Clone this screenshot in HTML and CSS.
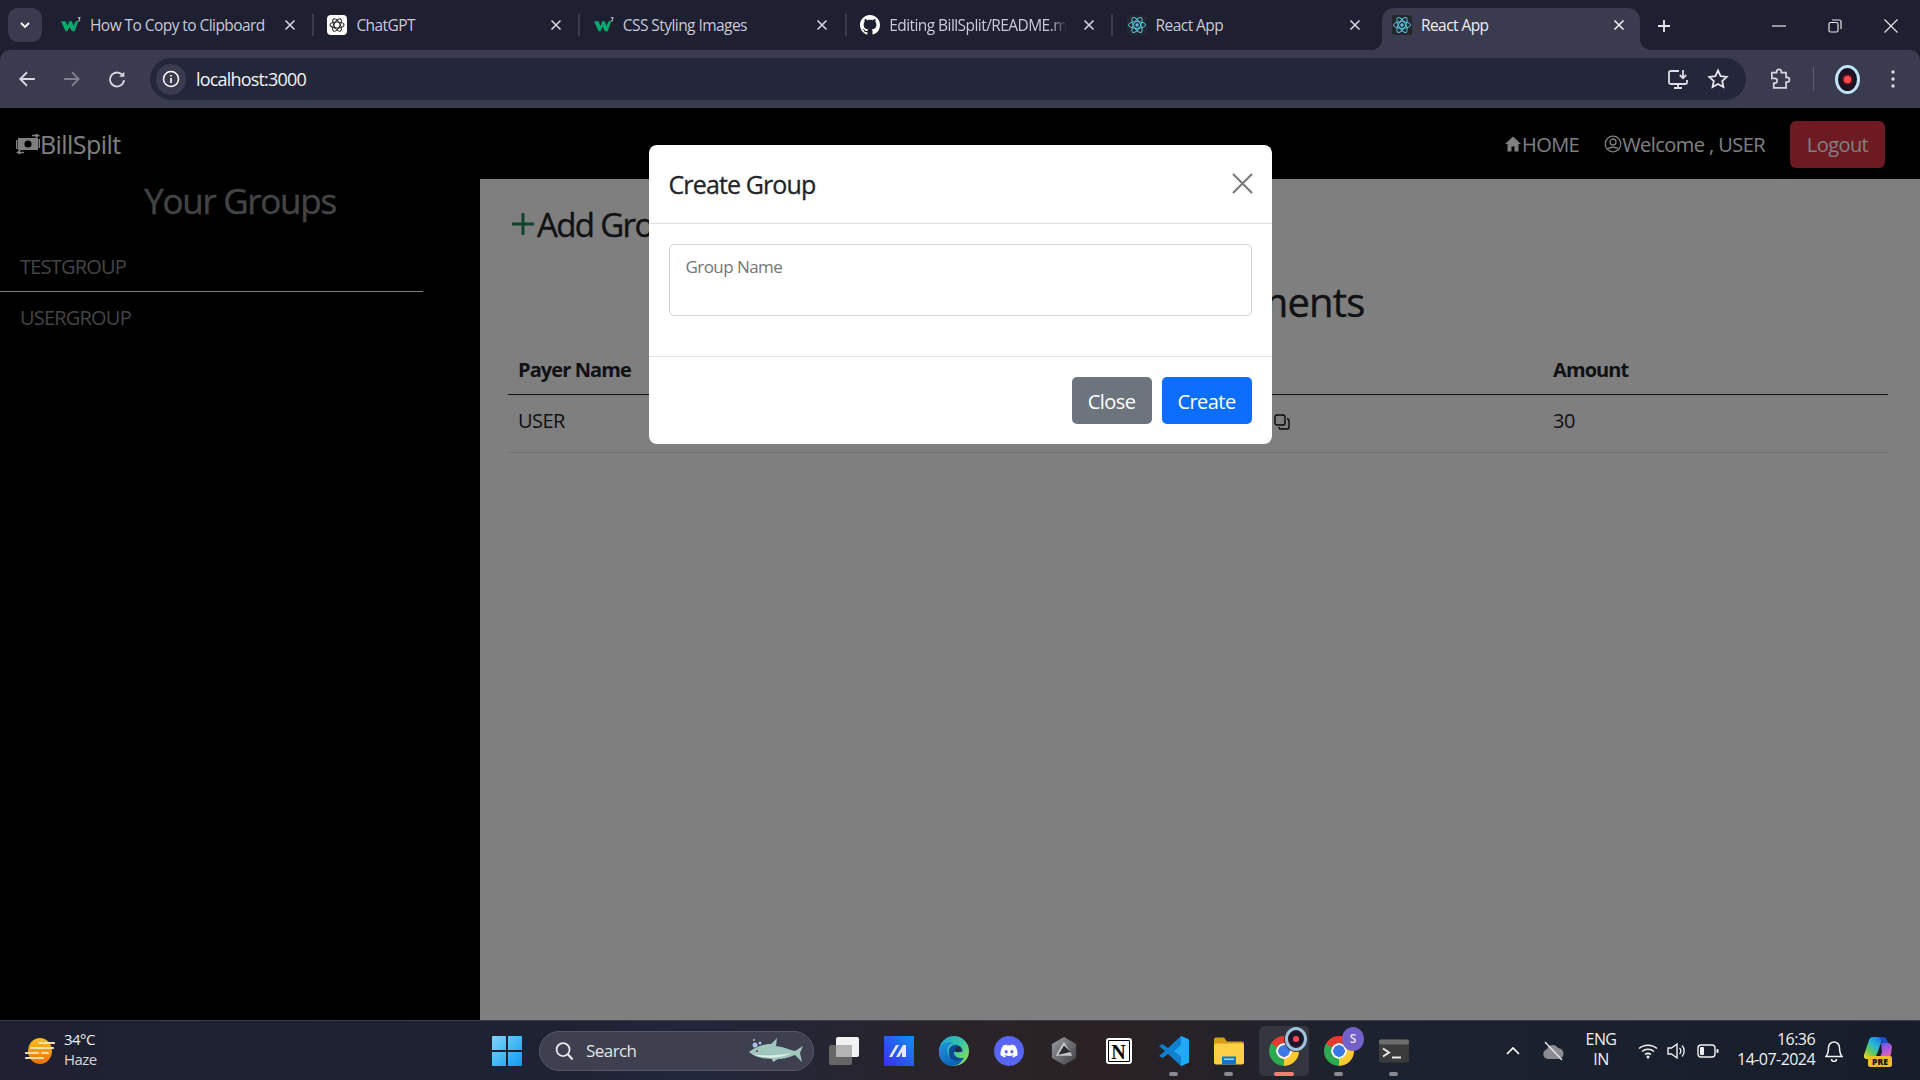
FILE: index.html
```html
<!DOCTYPE html>
<html lang="en">
<head>
<meta charset="utf-8">
<title>React App</title>
<link rel="stylesheet" href="styles.css">
</head>
<body>
<svg width="0" height="0" class="defs">
  <defs>
    <symbol id="w3" viewBox="0 0 22 18"><path fill="#04AA6D" d="M0 5h5l2.300 5 1.700-5h3l1.700 5L16 5h3l-4 11h-3l-2.500-5L7 16H5z"/><path fill="none" stroke="#e0e0e0" stroke-width="1" d="M18.500 1h2.700l-1.500 1.500c1.500 0 1.500 2.800-1.200 2"/></symbol>
    <symbol id="react" viewBox="0 0 20 20"><rect width="20" height="20" rx="2" fill="#23272f"/><g fill="none" stroke="#58c4dc" stroke-width="1"><ellipse cx="10" cy="10" rx="8.500" ry="3.400"/><ellipse cx="10" cy="10" rx="8.500" ry="3.400" transform="rotate(60 10 10)"/><ellipse cx="10" cy="10" rx="8.500" ry="3.400" transform="rotate(120 10 10)"/></g><circle cx="10" cy="10" r="1.700" fill="#58c4dc"/></symbol>
    <symbol id="x" viewBox="0 0 12 12"><path d="M1.500 1.500l9 9M10.500 1.500l-9 9" stroke="currentColor" stroke-width="1.600" fill="none"/></symbol>
  </defs>
</svg>

<div class="screen">
  <header class="browser">
    <div class="tabstrip">
      <button class="tab-menu"><svg width="12" height="8" viewBox="0 0 12 8"><path d="M2 2l4 4 4-4" fill="none" stroke="#fff" stroke-width="1.800"/></svg></button>
      <div class="tab">
        <svg class="fav" viewBox="0 0 22 18"><use href="#w3"/></svg><span class="tab-title">How To Copy to Clipboard</span>
        <svg class="tab-x"><use href="#x"/></svg><i class="tab-sep"></i>
      </div>
      <div class="tab">
        <svg class="fav" viewBox="0 0 20 20"><rect width="20" height="20" rx="4" fill="#fff"/><g fill="none" stroke="#333" stroke-width="1.200"><ellipse cx="10" cy="10" rx="7" ry="3"/><ellipse cx="10" cy="10" rx="7" ry="3" transform="rotate(60 10 10)"/><ellipse cx="10" cy="10" rx="7" ry="3" transform="rotate(120 10 10)"/></g></svg><span class="tab-title">ChatGPT</span>
        <svg class="tab-x"><use href="#x"/></svg><i class="tab-sep"></i>
      </div>
      <div class="tab">
        <svg class="fav" viewBox="0 0 22 18"><use href="#w3"/></svg><span class="tab-title">CSS Styling Images</span>
        <svg class="tab-x"><use href="#x"/></svg><i class="tab-sep"></i>
      </div>
      <div class="tab">
        <svg class="fav" viewBox="0 0 16 16"><path fill="#fff" d="M8 0C3.580 0 0 3.580 0 8c0 3.540 2.290 6.530 5.470 7.590.4.070.55-.17.55-.38 0-.19-.01-.82-.01-1.490-2.010.37-2.530-.49-2.690-.94-.09-.23-.48-.94-.82-1.130-.28-.15-.68-.52-.01-.53.63-.01 1.080.58 1.230.82.72 1.210 1.870.87 2.330.66.070-.52.28-.87.51-1.070-1.780-.2-3.640-.89-3.640-3.950 0-.87.31-1.590.82-2.150-.08-.2-.36-1.020.08-2.120 0 0 .67-.21 2.200.82.64-.18 1.320-.27 2-.27.68 0 1.360.09 2 .27 1.530-1.040 2.200-.82 2.200-.82.44 1.100.16 1.920.08 2.120.51.56.82 1.270.82 2.150 0 3.070-1.870 3.750-3.650 3.950.29.25.54.73.54 1.480 0 1.070-.01 1.930-.01 2.200 0 .21.15.46.55.38A8.013 8.013 0 0016 8c0-4.420-3.580-8-8-8z"/></svg><span class="tab-title tab-fade">Editing BillSplit/README.md</span>
        <svg class="tab-x"><use href="#x"/></svg><i class="tab-sep"></i>
      </div>
      <div class="tab">
        <svg class="fav" viewBox="0 0 20 20"><use href="#react"/></svg><span class="tab-title">React App</span>
        <svg class="tab-x"><use href="#x"/></svg>
      </div>
      <div class="tab tab-active">
        <svg class="fav" viewBox="0 0 20 20"><use href="#react"/></svg><span class="tab-title">React App</span>
        <svg class="tab-x"><use href="#x"/></svg>
      </div>
      <svg class="new-tab" viewBox="0 0 14 14"><path d="M7 1v12M1 7h12" stroke="#e6e6ee" stroke-width="1.800" fill="none"/></svg>
      <div class="win-controls">
        <svg viewBox="0 0 14 14"><path d="M0 7h14" stroke="#e6e6e6" stroke-width="1.200"/></svg>
        <svg viewBox="0 0 14 14"><rect x="1" y="3.500" width="9" height="9.500" rx="1.500" fill="none" stroke="#e6e6e6" stroke-width="1.200"/><path d="M4 1h7.500A1.500 1.500 0 0 1 13 2.500V10" fill="none" stroke="#e6e6e6" stroke-width="1.200"/></svg>
        <svg viewBox="0 0 14 14"><path d="M.5.500l13 13M13.500.500l-13 13" stroke="#e6e6e6" stroke-width="1.200"/></svg>
      </div>
    </div>
    <div class="toolbar">
      <div class="nav-btns">
        <svg viewBox="0 0 16 16"><path d="M15 8H2M8 2L2 8l6 6" fill="none" stroke="#d9d9e3" stroke-width="1.600"/></svg>
        <svg viewBox="0 0 16 16"><path d="M1 8h13M8 2l6 6-6 6" fill="none" stroke="#7f8090" stroke-width="1.600"/></svg>
        <svg viewBox="0 0 16 16"><path d="M13.500 5.500A6.200 6.200 0 1 0 14.200 9" fill="none" stroke="#d9d9e3" stroke-width="1.600"/><path d="M14.500 1.500v4.500H10z" fill="#d9d9e3"/></svg>
      </div>
      <div class="omnibox">
        <span class="site-info"><svg viewBox="0 0 18 18"><circle cx="9" cy="9" r="7.500" fill="none" stroke="#fff" stroke-width="1.500"/><path d="M9 8v5M9 5v1.600" stroke="#fff" stroke-width="1.600"/></svg></span>
        <span class="url">localhost:3000</span>
        <span class="omni-end">
          <svg viewBox="0 0 22 22"><path d="M12 3H3.500A1.500 1.500 0 0 0 2 4.500v10A1.500 1.500 0 0 0 3.500 16h15a1.500 1.500 0 0 0 1.500-1.500V12M7 20h8M11 16v4" fill="none" stroke="#dcdce6" stroke-width="1.800"/><path d="M16 2v8M12.800 7l3.200 3.200L19.200 7" fill="none" stroke="#dcdce6" stroke-width="1.800"/></svg>
          <svg viewBox="0 0 22 22"><path d="M11 2.500l2.600 5.600 6.100.7-4.500 4.200 1.200 6-5.400-3-5.400 3 1.200-6-4.500-4.200 6.100-.7z" fill="none" stroke="#e4e4ec" stroke-width="1.800"/></svg>
        </span>
      </div>
      <div class="tool-end">
        <svg class="puzzle" viewBox="0 0 22 22"><path d="M3 4h5V3a2.500 2.500 0 0 1 5 0v1h5v5h1a2.500 2.500 0 0 1 0 5h-1v6H5v-5h1a2.500 2.500 0 0 0 0-5H3z" fill="none" stroke="#d6d6e2" stroke-width="1.800" transform="translate(0 .8) scale(.95)"/></svg>
        <i class="tool-sep"></i>
        <span class="profile"><i></i></span>
        <svg class="kebab" viewBox="0 0 4 18"><circle cx="2" cy="2" r="1.700" fill="#d9d9e3"/><circle cx="2" cy="9" r="1.700" fill="#d9d9e3"/><circle cx="2" cy="16" r="1.700" fill="#d9d9e3"/></svg>
      </div>
    </div>
  </header>

  <div class="app">
    <nav class="navbar">
      <a class="brand">
        <svg viewBox="0 0 24 20"><rect x="2" y="4" width="20" height="12" fill="#fff"/><circle cx="12" cy="10" r="3.600" fill="#000"/><path d="M16 1.500h6M19.500 0l3 1.500-3 2M8 18.500H2M4.500 16l-3 2.500 3 1.500" stroke="#fff" stroke-width="1.500" fill="none"/><path d="M.7 6v9M23.300 5v9" stroke="#fff" stroke-width="1.500"/></svg>BillSpilt
      </a>
      <div class="nav-links">
        <a class="nav-link"><svg viewBox="0 0 18 18"><path d="M9 1.500L1 9h2.500v7.500h4v-5h3v5h4V9H17z" fill="#fff"/></svg>HOME</a>
        <a class="nav-link"><svg viewBox="0 0 18 18"><circle cx="9" cy="9" r="7.800" fill="none" stroke="#fff" stroke-width="1.300"/><circle cx="9" cy="7" r="3" fill="none" stroke="#fff" stroke-width="1.300"/><path d="M3.500 14.500C5 11.500 13 11.500 14.500 14.500" fill="none" stroke="#fff" stroke-width="1.300"/></svg>Welcome , USER</a>
        <button class="logout">Logout</button>
      </div>
    </nav>
    <div class="workspace">
      <aside class="sidebar">
        <h2 class="side-title">Your Groups</h2>
        <ul class="group-list">
          <li class="group-item group-first">TESTGROUP</li>
          <li class="group-item group-second">USERGROUP</li>
        </ul>
      </aside>
      <main class="content">
        <div class="add-group"><svg viewBox="0 0 26 26"><path d="M13 1v24M1 13h24" stroke="#198754" stroke-width="3.200" fill="none"/></svg>Add Group</div>
        <h3 class="pay-title">Pending Payments</h3>
        <table class="pay-table">
          <thead><tr><th>Payer Name</th><th></th><th></th><th>Amount</th></tr></thead>
          <tbody><tr><td>USER</td><td></td><td><svg class="copy" viewBox="0 0 16 16"><rect x="1" y="1" width="10" height="10" rx="2" fill="none" stroke="#111" stroke-width="1.400"/><path d="M13 5h.5A1.500 1.500 0 0 1 15 6.500v7a1.500 1.500 0 0 1-1.500 1.500h-7A1.500 1.500 0 0 1 5 13.500V13" fill="none" stroke="#111" stroke-width="1.400"/></svg></td><td>30</td></tr></tbody>
        </table>
      </main>
    </div>

    <div class="backdrop">
      <div class="modal">
        <div class="modal-head">
          <span class="modal-title">Create Group</span>
          <svg class="modal-x" viewBox="0 0 21 21"><path d="M1 1l19 19M20 1L1 20" stroke="#7b7b7b" stroke-width="2.200" fill="none"/></svg>
        </div>
        <div class="modal-body">
          <div class="field"><span class="placeholder">Group Name</span></div>
        </div>
        <div class="modal-foot">
          <button class="btn btn-gray">Close</button>
          <button class="btn btn-blue">Create</button>
        </div>
      </div>
    </div>
  </div>

  <footer class="taskbar">
    <div class="weather">
      <svg viewBox="0 0 32 28"><defs><linearGradient id="sun" x1="0" y1="0" x2="0" y2="1"><stop offset="0" stop-color="#fbc01a"/><stop offset="1" stop-color="#ea6f0a"/></linearGradient></defs><ellipse cx="16" cy="14" rx="12" ry="13" fill="url(#sun)"/><path d="M15 6h15M7 11h22M2 16h12M18 16h6M2 21h17" stroke="#f3dfae" stroke-width="2.200" stroke-linecap="round"/></svg>
      <div class="weather-text"><span>34°C</span><span class="haze">Haze</span></div>
    </div>
    <div class="center-icons">
      <svg class="win-logo" viewBox="0 0 30 30"><defs><linearGradient id="win" x1="0" y1="0" x2="1" y2="1"><stop offset="0" stop-color="#7ed6fb"/><stop offset="1" stop-color="#0f9bf3"/></linearGradient></defs><path fill="url(#win)" d="M0 1a1 1 0 0 1 1-1h13v14H0zM16 0h13a1 1 0 0 1 1 1v13H16zM0 16h14v14H1a1 1 0 0 1-1-1zM16 16h14v13a1 1 0 0 1-1 1H16z"/></svg>
      <div class="search">
        <svg viewBox="0 0 20 20"><circle cx="8.500" cy="8.500" r="6.800" fill="none" stroke="#e8e8ee" stroke-width="1.900"/><path d="M13.500 13.500l5 5.500" stroke="#e8e8ee" stroke-width="2.200"/></svg>
        <span>Search</span>
        <svg class="shark" viewBox="0 0 58 26"><circle cx="7" cy="7" r="2.500" fill="#a8bfe8"/><circle cx="12" cy="5" r="1.500" fill="#a8bfe8"/><circle cx="6" cy="2" r="1" fill="#a8bfe8"/><path d="M1 14c8-6 16-8 22-8l6-6-1 8c8 1 14 4 19 5l8-5-3 7 2 9-7-7c-8 3-12 4-17 4l-5 3-1-3c-10 0-17-2-23-7z" fill="#9fc7bd"/><path d="M4 16c10 2 24 2 40-1-12 6-28 6-40 1z" fill="#dfeee6"/><circle cx="9" cy="13" r=".9" fill="#8b1d2b"/></svg>
      </div>
      <div class="slot"><svg viewBox="0 0 30 28"><rect y="8" width="23" height="20" rx="2" fill="#666"/><rect x="7" width="23" height="20" rx="2" fill="#f2f2f2"/><rect x="7" y="8" width="16" height="12" fill="#b4b4b4"/></svg></div>
      <div class="slot"><svg viewBox="0 0 30 30"><defs><linearGradient id="mob" x1="0" y1="1" x2="1" y2="0"><stop offset="0" stop-color="#3d2cf0"/><stop offset="1" stop-color="#1090f0"/></linearGradient></defs><rect width="30" height="30" fill="url(#mob)"/><path d="M5 21L12 9h3L8 21zM12 21l7-12h3v12h-4v-5l-3 5z" fill="#e4e9ff"/></svg></div>
      <div class="slot"><svg viewBox="0 0 30 30"><defs><linearGradient id="edge1" x1="0" y1="0" x2="1" y2=".8"><stop offset="0" stop-color="#1f9fd6"/><stop offset=".55" stop-color="#37c5a8"/><stop offset="1" stop-color="#8ee04f"/></linearGradient><linearGradient id="edge2" x1="0" y1="0" x2=".6" y2="1"><stop offset="0" stop-color="#1b9ae0"/><stop offset="1" stop-color="#0f5fb0"/></linearGradient></defs><circle cx="15" cy="15" r="15" fill="url(#edge1)"/><path d="M.2 13C2 7 9 5 15 7c-6 .5-8 6-6 11 2 5 8 7 16 4-3 5-7 8-12 8C4 30-1.500 21 .2 13z" fill="url(#edge2)"/><path d="M10 17c-1-5 3-9 8-8 4 1 6 4 5.500 7H15c-1 3 3 7 10 6-3 3-8 4-11 2-3-1-4-4-4-7z" fill="#0d4a94"/><circle cx="19" cy="13.500" r="2.800" fill="#1e2a3a"/></svg></div>
      <div class="slot"><svg viewBox="0 0 30 30"><circle cx="15" cy="15" r="15" fill="#5865f2"/><g transform="translate(6.500 6.500) scale(.71)"><path fill="#fff" d="M20.317 4.370a19.791 19.791 0 00-4.885-1.515.074.074 0 00-.079.037c-.211.375-.445.865-.608 1.250-1.845-.276-3.680-.276-5.487 0-.164-.393-.406-.874-.618-1.250a.077.077 0 00-.079-.037 19.736 19.736 0 00-4.885 1.515.07.07 0 00-.032.028C.533 9.046-.319 13.580.099 18.058a.082.082 0 00.031.056c2.053 1.508 4.041 2.423 5.993 3.030a.078.078 0 00.084-.028c.462-.63.873-1.295 1.226-1.994a.076.076 0 00-.042-.106c-.653-.248-1.274-.55-1.872-.892a.077.077 0 01-.008-.128c.126-.094.252-.192.372-.291a.074.074 0 01.078-.011c3.928 1.793 8.180 1.793 12.061 0a.074.074 0 01.079.01c.12.099.246.198.373.292a.077.077 0 01-.007.128 12.299 12.299 0 01-1.873.891.077.077 0 00-.041.107c.36.698.772 1.363 1.225 1.993a.076.076 0 00.084.029c1.961-.607 3.950-1.522 6.002-3.030a.077.077 0 00.032-.055c.5-5.177-.838-9.674-3.549-13.660a.061.061 0 00-.031-.029zM8.020 15.331c-1.183 0-2.157-1.086-2.157-2.419 0-1.333.956-2.419 2.157-2.419 1.211 0 2.176 1.095 2.157 2.419 0 1.333-.956 2.419-2.157 2.419zm7.975 0c-1.183 0-2.157-1.086-2.157-2.419 0-1.333.955-2.419 2.157-2.419 1.211 0 2.176 1.095 2.157 2.419 0 1.333-.946 2.419-2.157 2.419z"/></g></svg></div>
      <div class="slot"><svg class="hex" viewBox="0 0 28 30"><defs><linearGradient id="hexg" x1="0" y1="0" x2="1" y2="1"><stop offset="0" stop-color="#9a9ca0"/><stop offset="1" stop-color="#3e4044"/></linearGradient></defs><path d="M14 0l13 7.500v15L14 30 1 22.500v-15z" fill="url(#hexg)"/><path d="M14 5l9 15H5z" fill="#c4c6c9"/><path d="M14 9L8 19l13-3z" fill="#2b2c30"/></svg></div>
      <div class="slot"><span class="notion">N</span></div>
      <div class="slot"><svg viewBox="0 0 30 30"><path d="M22 0l8 3.500v23L22 30 9 18l-5.500 4L0 20l6-5-6-5 3.500-2L9 12z" fill="#0f7fd0"/><path d="M22 0l8 3.500v23L22 30V21l-7-6 7-6z" fill="#23a8f2"/></svg><i class="run-dot"></i></div>
      <div class="slot"><svg viewBox="0 0 30 27"><path d="M0 2a2 2 0 0 1 2-2h8l3 4h15a2 2 0 0 1 2 2v3H0z" fill="#d79c1e"/><rect y="6" width="30" height="21" rx="2" fill="#fdd045"/><rect x="8" y="19" width="14" height="8" fill="#1476c9"/><rect x="10" y="21" width="10" height="1.500" fill="#9fd3f7"/></svg><i class="run-dot"></i></div>
      <div class="slot slot-active">
        <span class="chrome"></span>
        <span class="badge badge-avatar"><i></i></span>
        <i class="run-bar"></i>
      </div>
      <div class="slot">
        <span class="chrome"></span>
        <span class="badge badge-s">S</span>
        <i class="run-dot"></i>
      </div>
      <div class="slot"><svg viewBox="0 0 30 23"><rect width="30" height="23" rx="2" fill="#3b3b3b"/><rect width="30" height="5" rx="2" fill="#6d6d6d"/><path d="M4 9l6 4-6 4" fill="none" stroke="#e8e8e8" stroke-width="2"/><path d="M13 18h9" stroke="#e8e8e8" stroke-width="2"/></svg><i class="run-dot"></i></div>
    </div>
    <div class="tray">
      <svg class="tray-chevron" viewBox="0 0 14 8"><path d="M1 7l6-6 6 6" fill="none" stroke="#fff" stroke-width="1.700"/></svg>
      <svg class="tray-cloud" viewBox="0 0 22 20"><path d="M6 18a5 5 0 0 1-1-9.800A6 6 0 0 1 16 7a5.500 5.500 0 0 1 0 11z" fill="#8b8b92"/><path d="M3 1l17 18" stroke="#e8e8e8" stroke-width="1.400"/></svg>
      <div class="lang"><span>ENG</span><span>IN</span></div>
      <svg class="tray-wifi" viewBox="0 0 20 16"><path d="M1 5.500c5-4.500 13-4.500 18 0M4 8.500c3.500-3 8.500-3 12 0M7 11.500c2-1.500 4-1.500 6 0" fill="none" stroke="#f1f1f1" stroke-width="1.500"/><circle cx="10" cy="14" r="1.500" fill="#f1f1f1"/></svg>
      <svg class="tray-vol" viewBox="0 0 20 18"><path d="M1 6h3.500L10 2v14l-5.500-4H1z" fill="none" stroke="#f1f1f1" stroke-width="1.400"/><path d="M12.500 6a4 4 0 0 1 0 6M15 3.500a8 8 0 0 1 0 11" fill="none" stroke="#f1f1f1" stroke-width="1.300"/></svg>
      <svg class="tray-bat" viewBox="0 0 22 14"><rect x="1" y="1" width="17" height="12" rx="3" fill="none" stroke="#f1f1f1" stroke-width="1.400"/><rect x="3" y="3" width="4" height="8" rx="1" fill="#f1f1f1"/><rect x="19.500" y="5" width="2" height="4" rx="1" fill="#f1f1f1"/></svg>
      <div class="clock"><span>16:36</span><span>14-07-2024</span></div>
      <svg class="tray-bell" viewBox="0 0 18 22"><path d="M9 2a5.500 5.500 0 0 0-5.500 5.500c0 4-.5 6.500-2.500 9h16c-2-2.500-2.500-5-2.500-9A5.500 5.500 0 0 0 9 2zM6.500 19a2.500 2.500 0 0 0 5 0" fill="none" stroke="#f1f1f1" stroke-width="1.500"/></svg>
      <div class="copilot">
        <svg viewBox="0 0 28 24"><defs><linearGradient id="cop1" x1=".9" y1="0" x2=".1" y2="1"><stop offset="0" stop-color="#1f6fe0"/><stop offset=".4" stop-color="#25b7d8"/><stop offset=".7" stop-color="#6ccb4c"/><stop offset="1" stop-color="#f2d43a"/></linearGradient><linearGradient id="cop2" x1=".3" y1="0" x2=".8" y2="1"><stop offset="0" stop-color="#5a5be8"/><stop offset=".5" stop-color="#b45ad8"/><stop offset="1" stop-color="#f06a9a"/></linearGradient></defs><path d="M9 1h10l-6 17c-1 3-3 5-6 5H3c-2.500 0-3.500-2-3-4L5 4c.5-2 2-3 4-3z" fill="url(#cop1)"/><path d="M14 1h5c2 0 3.500 1 4 3l1 3h-6c-1-3-2-5-4-6z" fill="#1d4fc8"/><path d="M17 7h7c2 0 3.500 2 4 4l-1 7c-.5 3-3 5-6 5h-8c3-1 4-4 5-7z" fill="url(#cop2)"/></svg>
        <span class="pre">PRE</span>
      </div>
    </div>
  </footer>
</div>
</body>
</html>
```

FILE: styles.css
```css
* { box-sizing: border-box; }
html, body { margin: 0; padding: 0; }
body { width: 1920px; height: 1080px; overflow: hidden; font-family: "Open Sans", "Noto Sans", "Liberation Sans", sans-serif; letter-spacing: -0.035em; }
.defs { position: absolute; }
svg { display: block; flex: none; }
i { display: block; font-style: normal; }
button { font: inherit; letter-spacing: inherit; border: 0; }

.screen { display: flex; flex-direction: column; height: 1080px; }

/* browser chrome */
.browser { height: 109px; background: #1e1f30; flex: none; border-bottom: 1px solid #000; }
.tabstrip { height: 50px; display: flex; align-items: flex-start; padding: 8px 0 0 8px; }
.tab-menu { width: 34px; height: 34px; margin-right: 6px; border-radius: 10px; background: #3a3b4f; display: flex; align-items: center; justify-content: center; padding: 0; }
.tab { position: relative; width: 266.4px; height: 42px; flex: none; display: flex; align-items: center; padding: 0 0 8px 13px; color: #c9c9d8; font-size: 15.5px; }
.fav { width: 20px; height: 20px; margin-right: 9px; }
.tab-title { width: 195px; white-space: nowrap; overflow: hidden; }
.tab-fade { -webkit-mask-image: linear-gradient(to right, #000 162px, transparent 178px); mask-image: linear-gradient(to right, #000 162px, transparent 178px); }
.tab-x { width: 12px; height: 12px; color: #d5d5e0; margin-left: -1.500px; }
.tab-sep { position: absolute; left: 264px; top: 6px; width: 2px; height: 22px; background: #3a3b4f; }
.tab-active { width: 258px; margin-left: 2px; background: #3a3b4f; border-radius: 12px 12px 0 0; color: #eeeef4; padding-left: 10px; }
.tab-active .tab-x { margin-left: -3px; color: #eeeef4; }
.tab-active::before, .tab-active::after { content: ""; position: absolute; bottom: 0; width: 12px; height: 12px; }
.tab-active::before { left: -12px; background: radial-gradient(circle at 0 0, transparent 12px, #3a3b4f 12.500px); }
.tab-active::after { right: -12px; background: radial-gradient(circle at 100% 0, transparent 12px, #3a3b4f 12.500px); }
.new-tab { width: 14px; height: 14px; margin: 11px 0 0 17px; }
.win-controls { margin-left: auto; display: flex; gap: 42px; padding: 11px 22px 0 0; }
.win-controls svg { width: 14px; height: 14px; }

.toolbar { height: 58px; background: #3a3b4f; border-radius: 10px 10px 0 0; display: flex; align-items: center; padding: 0 0 0 18px; }
.nav-btns { display: flex; gap: 27px; width: 132px; }
.nav-btns svg { width: 18px; height: 18px; }
.omnibox { width: 1596px; height: 42px; border-radius: 21px; background: #24263a; display: flex; align-items: center; padding: 0 17px 0 6px; }
.site-info { width: 30px; height: 31px; border-radius: 15px; background: #3a3b4f; display: flex; align-items: center; justify-content: center; }
.site-info svg { width: 18px; height: 18px; }
.url { color: #f2f2f6; font-size: 18px; margin-left: 10px; letter-spacing: -0.045em; }
.omni-end { margin-left: auto; display: flex; gap: 18px; }
.omni-end svg { width: 22px; height: 22px; }
.tool-end { flex: 1; display: flex; align-items: center; padding-left: 23px; }
.puzzle { width: 22px; height: 24px; }
.tool-sep { width: 1px; height: 24px; background: #5e5f72; margin-left: 22px; }
.profile { width: 25px; height: 29px; border-radius: 50%; border: 3px solid #bfe3fb; background: #1b1420; margin-left: 21px; display: flex; align-items: center; justify-content: center; }
.profile i { width: 7px; height: 7px; border-radius: 50%; background: #ff4b52; box-shadow: 0 0 2px 1px #c2202e; }
.kebab { width: 4px; height: 18px; margin-left: 31px; }

/* app */
.app { position: relative; flex: 1; display: flex; flex-direction: column; background: #fff; }
.navbar { height: 70px; background: #000; display: flex; align-items: center; justify-content: space-between; padding: 0 35px 0 16px; flex: none; }
.brand { display: flex; align-items: center; color: #fff; font-size: 25px; }
.brand svg { width: 24px; height: 20px; }
.nav-links { display: flex; align-items: center; }
.nav-link { display: flex; align-items: center; color: #fff; font-size: 20px; margin-right: 25px; }
.nav-link svg { width: 18px; height: 18px; }
.logout { width: 95px; height: 47px; border-radius: 6px; background: #dc3545; color: #fff; font-size: 20px; padding: 0; }

.workspace { flex: 1; display: flex; }
.sidebar { width: 480px; background: #000; padding-top: 1px; color: #888; }
.side-title { margin: 0; font-size: 35px; font-weight: 400; -webkit-text-stroke: .4px currentColor; line-height: 42px; text-align: center; letter-spacing: -0.037em; }
.group-list { list-style: none; margin: 18px 0 0; padding: 0; width: 423px; }
.group-item { font-size: 20px; line-height: 30px; padding: 10px 20px; color: #888; letter-spacing: -0.04em; }
.group-first { padding: 12px 20px 9px; border-bottom: 1px solid #fff; }
.group-second { padding-top: 11px; }

.content { flex: 1; background: #fff; padding: 21px 32px 0 28px; color: #212529; }
.add-group { display: flex; align-items: center; gap: 2px; height: 48px; font-size: 33px; font-weight: 400; -webkit-text-stroke: .4px currentColor; padding-left: 3px; letter-spacing: -0.05em; }
.add-group svg { width: 24px; height: 24px; }
.pay-title { margin: 33px 0 24px; font-size: 40px; font-weight: 400; -webkit-text-stroke: .4px currentColor; line-height: 42px; text-align: center; letter-spacing: -0.02em; }
.pay-table { width: 100%; border-collapse: collapse; table-layout: fixed; font-size: 20px; line-height: 30px; }
.pay-table th { text-align: left; height: 47px; padding: 8px 8px 8px 10px; border-bottom: 1px solid #212529; font-weight: 700; letter-spacing: -0.045em; }
.pay-table td { padding: 11px 8px 16px 10px; border-bottom: 1px solid #dee2e6; }
.copy { display: inline-block; width: 16px; height: 16px; vertical-align: -2px; margin-left: 66px; }

/* modal */
.backdrop { position: absolute; inset: 0; background: rgba(0,0,0,.5); display: flex; justify-content: center; align-items: flex-start; padding-top: 36px; }
.modal { width: 623px; height: 299px; background: #fff; border-radius: 8px; display: flex; flex-direction: column; }
.modal-head { height: 79px; display: flex; align-items: center; justify-content: space-between; padding: 0 20px; border-bottom: 1px solid #dee2e6; flex: none; }
.modal-title { font-size: 25px; font-weight: 400; -webkit-text-stroke: .3px currentColor; color: #212529; letter-spacing: -0.035em; }
.modal-x { width: 21px; height: 21px; margin-right: -1px; margin-top: -1px; }
.modal-body { height: 132px; padding: 20px 20px 0; flex: none; }
.field { height: 72px; border: 1px solid #ced4da; border-radius: 5px; padding: 10px 16px; }
.placeholder { font-size: 17px; color: #757575; }
.modal-foot { flex: 1; border-top: 1px solid #dee2e6; display: flex; justify-content: flex-end; align-items: flex-start; gap: 10px; padding: 20px 20px 0; }
.btn { height: 47px; border-radius: 5px; color: #fff; font-size: 20px; padding: 2px 0 0; }
.btn-gray { width: 80px; background: #6c757d; }
.btn-blue { width: 90px; background: #0d6efd; }

/* taskbar */
.taskbar { height: 60px; flex: none; display: flex; align-items: center; border-top: 1px solid #3b3c48; background: linear-gradient(90deg, #1f2132 0%, #1e2233 30%, #22273b 36%, #2a2327 52%, #2a2224 58%, #1b2230 72%, #171d2b 100%); color: #f1f1f1; position: relative; }
.weather { width: 492px; display: flex; align-items: center; padding-left: 24px; flex: none; }
.weather > svg { width: 32px; height: 28px; }
.weather-text { display: flex; flex-direction: column; font-size: 15px; line-height: 20px; margin-left: 8px; margin-top: -3px; }
.haze { color: #d8d8dc; }
.center-icons { display: flex; align-items: center; flex: none; }
.win-logo { width: 30px; height: 30px; }
.search { width: 275px; height: 40px; margin-left: 17px; border-radius: 20px; border: 1px solid #555766; background: #3e404f; display: flex; align-items: center; padding-left: 15px; font-size: 17px; color: #e4e4ea; position: relative; margin-right: 2px; }
.search > svg:first-child { width: 19px; height: 20px; }
.search span { margin-left: 12px; }
.shark { position: absolute; right: 7px; top: 6px; width: 58px; height: 26px; }
.slot { position: relative; width: 55px; height: 50px; flex: none; display: flex; align-items: center; justify-content: center; }
.slot > svg { width: 30px; height: 30px; max-height: 30px; }
.slot > svg.hex { width: 28px; height: 28px; }
.slot-active { background: #33353f; border-radius: 5px; width: 50px; margin: 0 2.500px; }
.notion { width: 26px; height: 26px; border: 2px solid #fff; background: #fff; color: #000; font: 700 20px/24px "Liberation Serif", serif; letter-spacing: 0; text-align: center; border-radius: 3px; box-shadow: inset 0 0 0 1px #000; }
.run-dot { position: absolute; left: 50%; bottom: 0; width: 9px; height: 4px; margin-left: -4.500px; border-radius: 2px; background: #8a8a92; }
.run-bar { position: absolute; left: 50%; bottom: 0; width: 20px; height: 4px; margin-left: -10px; border-radius: 2px; background: #f08070; }
.chrome { width: 30px; height: 30px; border-radius: 50%; background: radial-gradient(circle at 50% 50%, #3b78e7 0 5.500px, #f4f4f4 6px 7.500px, transparent 8px), conic-gradient(from 60deg, #fdc92f 0 120deg, #2da94f 120deg 240deg, #e33b2e 240deg 360deg); }
.badge { position: absolute; right: 2px; top: 1px; width: 22px; height: 24px; border-radius: 50%; display: flex; align-items: center; justify-content: center; }
.badge-avatar { background: #20162a; border: 3px solid #9fc3dd; box-shadow: 0 0 0 1px #33353f; }
.badge-avatar i { width: 6px; height: 6px; border-radius: 50%; background: #ff4b52; }
.badge-s { background: #7360c8; color: #e8e4ff; font-size: 12px; font-weight: 600; letter-spacing: 0; }

.tray { flex: 1; height: 100%; display: flex; align-items: center; padding-left: 85px; }
.tray-chevron { width: 14px; height: 8px; }
.tray-cloud { width: 22px; height: 20px; margin-left: 22px; }
.lang { display: flex; flex-direction: column; align-items: center; font-size: 16px; line-height: 20px; width: 40px; margin-left: 17px; margin-top: -3px; }
.tray-wifi { width: 20px; height: 16px; margin-left: 17px; }
.tray-vol { width: 20px; height: 18px; margin-left: 9px; }
.tray-bat { width: 22px; height: 14px; margin-left: 10px; }
.clock { display: flex; flex-direction: column; align-items: flex-end; font-size: 16px; line-height: 20px; width: 84px; margin-left: 12px; margin-top: -3px; }
.tray-bell { width: 18px; height: 22px; margin-left: 10px; }
.copilot { position: relative; width: 28px; height: 30px; margin-left: 21px; }
.copilot svg { width: 28px; height: 24px; }
.pre { position: absolute; left: 4px; bottom: -1px; width: 24px; height: 11px; border-radius: 2px; background: #f1b92e; color: #111; font-size: 8.500px; line-height: 11px; font-weight: 800; text-align: center; letter-spacing: 0; }
```
